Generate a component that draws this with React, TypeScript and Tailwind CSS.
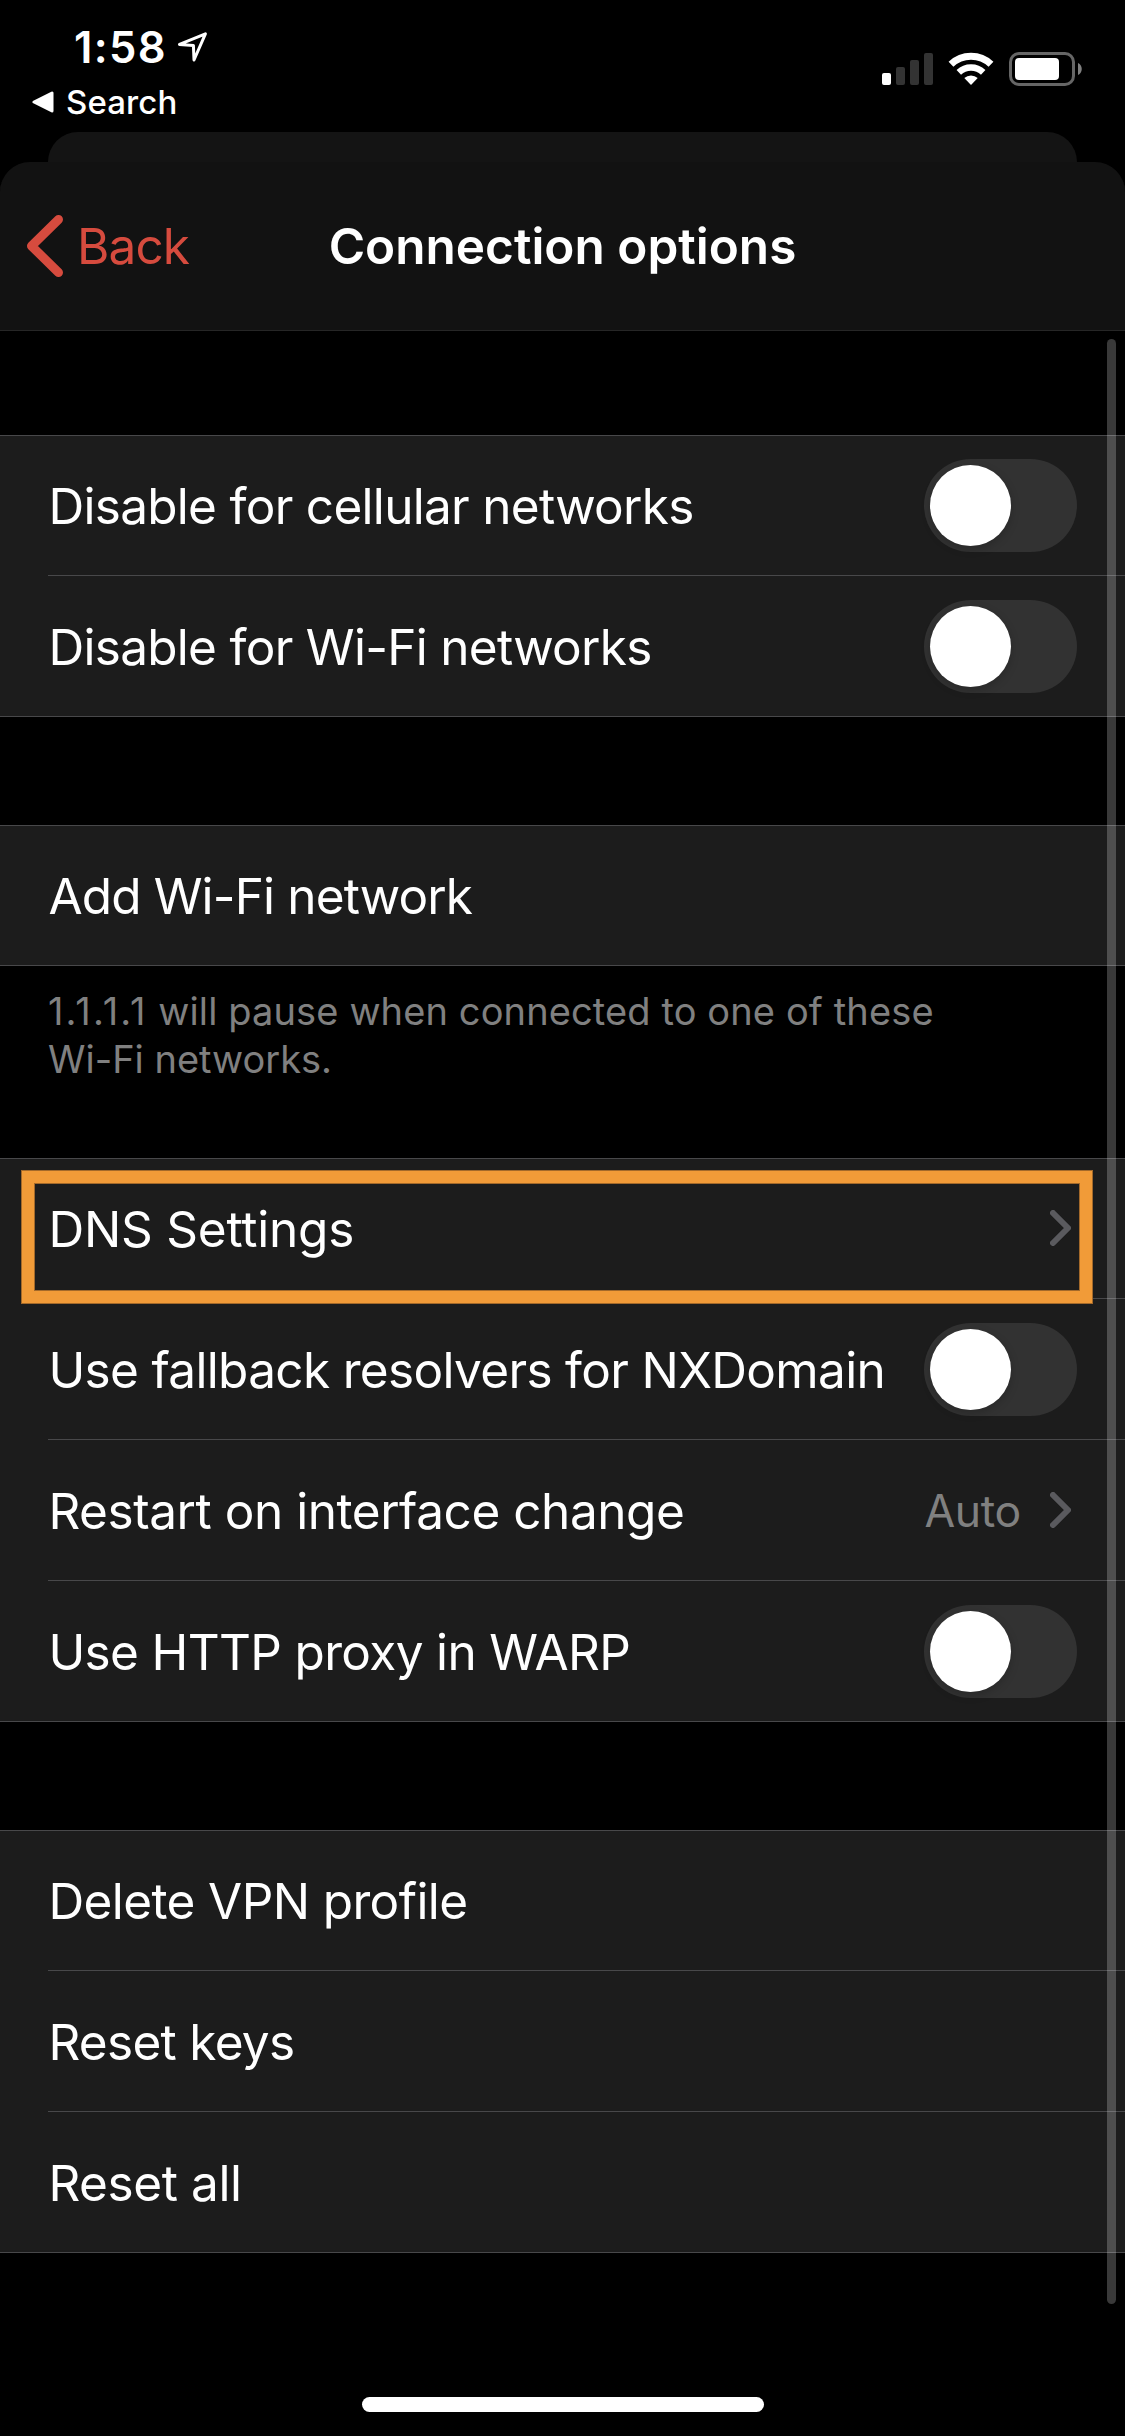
import type { ReactNode } from "react";

function Label({ children, className = "tracking-[-0.7px]" }: { children: ReactNode; className?: string }) {
  return (
    <span className={"pt-0.5 pl-[0.4px] text-[49.5px] leading-[60px] whitespace-nowrap text-white " + className}>
      {children}
    </span>
  );
}

function Toggle() {
  return (
    <span className="flex h-[93px] w-[153px] items-center rounded-full bg-[#323232] p-1.5">
      <span className="size-[81px] rounded-full bg-white shadow-[0_3px_10px_rgba(0,0,0,0.2)]" />
    </span>
  );
}

function Chevron() {
  return (
    <svg width="21" height="36" viewBox="0 0 21 36" fill="none" className="-mt-px mr-1.5">
      <path d="M3 3 18 18 3 33" stroke="#5a5a5e" strokeWidth="6" strokeLinecap="round" strokeLinejoin="round" />
    </svg>
  );
}

function Row({ children, last = false }: { children: ReactNode; last?: boolean }) {
  return (
    <div className={last ? "h-[141px] border-b border-[#48484a]" : "h-[141px] pl-12"}>
      <div
        className={
          last
            ? "flex h-[140px] items-center justify-between pr-12 pl-12"
            : "flex h-[141px] items-center justify-between border-b border-[#48484a] pr-12"
        }
      >
        {children}
      </div>
    </div>
  );
}

function Group({ children, className = "" }: { children: ReactNode; className?: string }) {
  return <section className={"bg-[#1c1c1c] shadow-[inset_0_1px_0_#48484a] " + className}>{children}</section>;
}

function StatusBar() {
  return (
    <header className="flex h-[132px] justify-between">
      <div className="flex flex-col pt-8 pl-8">
        <div className="flex h-[30px] items-center pl-[42px]">
          <span className="w-[103px] text-[43.5px] leading-[54px] font-semibold tracking-[1.4px]">1:58</span>
          <svg width="31" height="30" viewBox="0 0 31 30" fill="none">
            <path d="M2.5 12.4 28.4 1.8 17 28 16.4 13.4Z" stroke="#fff" strokeWidth="3" strokeLinejoin="round" />
          </svg>
        </div>
        <div className="mt-[22px] flex h-9 items-center gap-3">
          <svg width="22" height="22" viewBox="0 0 22 22">
            <path d="M2 11 20 2V20Z" fill="#fff" stroke="#fff" strokeWidth="3" strokeLinejoin="round" />
          </svg>
          <span className="text-[33px] leading-9 font-medium tracking-[0.1px]">Search</span>
        </div>
      </div>
      <div className="mt-[52px] flex h-[34px] items-start pr-[42px]">
        <svg width="52" height="34" viewBox="0 0 52 34" className="mr-3.5">
          <rect x="0" y="21" width="9" height="12" rx="2" fill="#fff" />
          <rect x="14" y="15" width="9" height="18" rx="2" fill="#333" />
          <rect x="28" y="8" width="9" height="25" rx="2" fill="#333" />
          <rect x="42" y="1" width="9" height="32" rx="2" fill="#333" />
        </svg>
        <svg width="46" height="34" viewBox="0 0 46 34" fill="none" className="mr-[15px]">
          <path d="M3 12.2A29 29 0 0 1 43 12.2" stroke="#fff" strokeWidth="7" />
          <path d="M10.8 20.3A17.8 17.8 0 0 1 35.2 20.3" stroke="#fff" strokeWidth="6.5" />
          <path d="M16.3 26A10 10 0 0 1 29.7 26L23 33Z" fill="#fff" />
        </svg>
        <svg width="74" height="34" viewBox="0 0 74 34">
          <rect x="1.5" y="1.5" width="63" height="31" rx="8.5" fill="none" stroke="#666" strokeWidth="3" />
          <rect x="6" y="6" width="44" height="22" rx="4" fill="#fff" />
          <path d="M69 11C74 13 74 21 69 23Z" fill="#808080" />
        </svg>
      </div>
    </header>
  );
}

export default function App() {
  return (
    <div className="relative h-[2436px] w-[1125px] overflow-hidden bg-black font-['Inter','Liberation_Sans',sans-serif] text-white">
      <StatusBar />
      <div className="mx-12 h-[30px] rounded-t-[30px] bg-[#141414]" />
      <nav className="grid h-[169px] grid-cols-[300px_1fr_300px] items-center rounded-t-[30px] bg-[#121212] pb-px shadow-[inset_0_-1px_0_#262626]">
        <div className="flex items-center gap-[13px] pl-[26px] text-[#d64b3e]">
          <svg width="38" height="64" viewBox="0 0 38 64" fill="none">
            <path d="M32.5 5.5 5.5 32 32.5 58.5" stroke="currentColor" strokeWidth="9" strokeLinecap="round" strokeLinejoin="round" />
          </svg>
          <span className="text-[49.5px] leading-[60px] tracking-[-0.9px]">Back</span>
        </div>
        <h1 className="text-center text-[49.5px] leading-[60px] font-semibold whitespace-nowrap">Connection options</h1>
      </nav>

      <Group className="mt-[104px]">
        <Row>
          <Label>Disable for cellular networks</Label>
          <Toggle />
        </Row>
        <Row last>
          <Label>Disable for Wi-Fi networks</Label>
          <Toggle />
        </Row>
      </Group>

      <Group className="mt-[108px]">
        <Row last>
          <Label className="tracking-[-0.85px]">Add Wi-Fi network</Label>
        </Row>
      </Group>
      <p className="h-[192px] pt-[21px] pl-12 text-[38px] leading-[48px] text-[#808080]">
        <span className="tracking-[2.1px]">1.1.1.1</span>
        <span className="tracking-[0.12px]"> will pause when connected to one of these</span>
        <br />
        Wi-Fi networks.
      </p>

      <Group className="relative">
        <Row>
          <Label className="tracking-[-0.2px]">DNS Settings</Label>
          <Chevron />
        </Row>
        <Row>
          <Label className="tracking-[-0.67px]">Use fallback resolvers for NXDomain</Label>
          <Toggle />
        </Row>
        <Row>
          <Label className="tracking-[-0.45px]">Restart on interface change</Label>
          <span className="flex items-center gap-[29px]">
            <span className="pt-0.5 text-[44.5px] leading-[54px] tracking-[-0.3px] text-[#808080]">Auto</span>
            <Chevron />
          </span>
        </Row>
        <Row last>
          <Label className="tracking-[-0.65px]">Use HTTP proxy in WARP</Label>
          <Toggle />
        </Row>
        <div className="absolute top-3 left-[21px] h-[134px] w-[1072px] border border-[#a3692a]">
          <div className="h-full border-[12px] border-[#f19b38] shadow-[inset_0_0_0_1px_#a3692a]" />
        </div>
      </Group>

      <Group className="mt-[108px]">
        <Row>
          <Label className="tracking-[-0.6px]">Delete VPN profile</Label>
        </Row>
        <Row>
          <Label>Reset keys</Label>
        </Row>
        <Row last>
          <Label className="tracking-[-0.4px]">Reset all</Label>
        </Row>
      </Group>

      <div className="absolute top-[339px] right-[9px] h-[1965px] w-[9px] rounded-full bg-white/[0.225]" />
      <div className="mx-auto mt-[144px] h-[15px] w-[402px] rounded-full bg-white" />
    </div>
  );
}
